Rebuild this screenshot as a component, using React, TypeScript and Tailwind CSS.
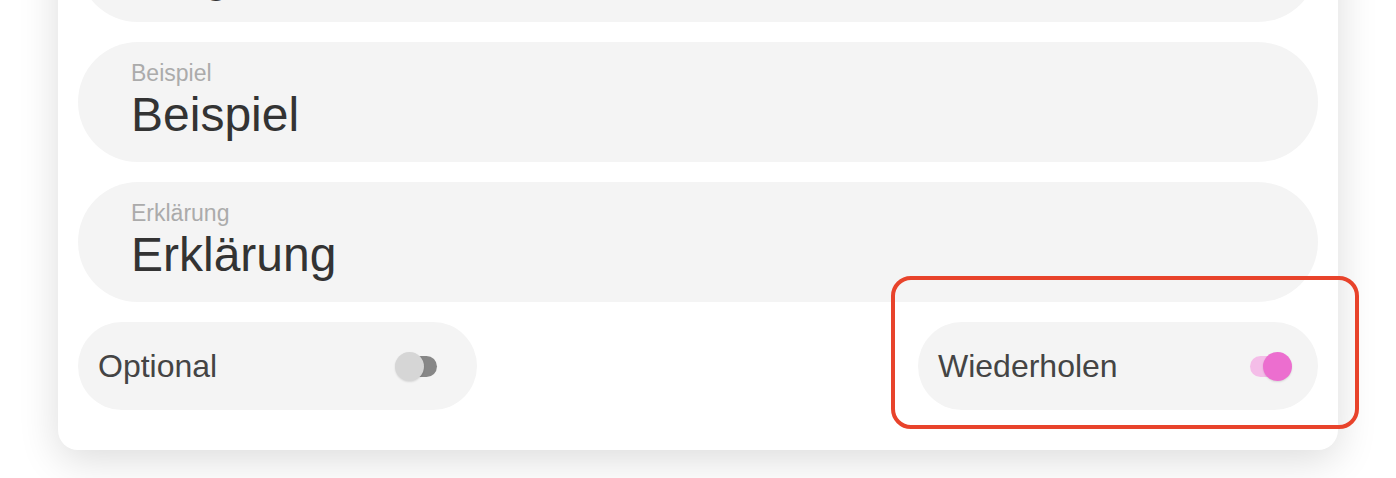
import React from "react";

function Field({ label, value }: { label: string; value: string }) {
  return (
    <div className="h-[120px] rounded-full bg-[#f4f4f4] pl-[53px] pt-[20px]">
      <div className="text-[23px] leading-[23px] text-[#ababab]">{label}</div>
      <div className="mt-[6px] text-[48px] leading-[48px] text-[#333333]">{value}</div>
    </div>
  );
}

function Toggle({ on }: { on: boolean }) {
  return (
    <div className={`relative h-[21px] w-[40px] rounded-full ${on ? "bg-[#f4bde8]" : "bg-[#878787]"}`}>
      <div
        className={`absolute top-[-4px] h-[29px] w-[29px] rounded-full shadow-[0_1px_2px_rgba(0,0,0,0.12)] ${
          on ? "right-[-2px] bg-[#ec6ecf]" : "left-[-2px] bg-[#d6d6d6]"
        }`}
      />
    </div>
  );
}

export default function App() {
  return (
    <div
      className="relative h-[478px] w-full overflow-hidden bg-white"
      style={{ fontFamily: '"Liberation Sans", Arial, sans-serif' }}
    >
      <div className="ml-[58px] mt-[-118px] w-[1280px] rounded-[20px] bg-white px-[20px] pb-[40px] pt-[20px] shadow-[0_10px_40px_rgba(0,0,0,0.14)]">
        <div className="flex flex-col gap-[20px]">
          <Field label="Frage" value="Frage" />
          <Field label="Beispiel" value="Beispiel" />
          <Field label="Erklärung" value="Erklärung" />
        </div>
        <div className="mt-[20px] flex justify-between">
          <div className="flex h-[88px] w-[399px] items-center justify-between rounded-full bg-[#f4f4f4] pl-[20px] pr-[40px]">
            <span className="text-[32px] text-[#444444]">Optional</span>
            <Toggle on={false} />
          </div>
          <div className="flex h-[88px] w-[400px] items-center justify-between rounded-full bg-[#f4f4f4] pl-[20px] pr-[28px]">
            <span className="text-[32px] text-[#444444]">Wiederholen</span>
            <Toggle on={true} />
          </div>
        </div>
      </div>
      <div className="pointer-events-none absolute left-[891px] top-[276px] h-[153px] w-[468px] rounded-[20px] border-[4px] border-[#e8432b]" />
    </div>
  );
}
